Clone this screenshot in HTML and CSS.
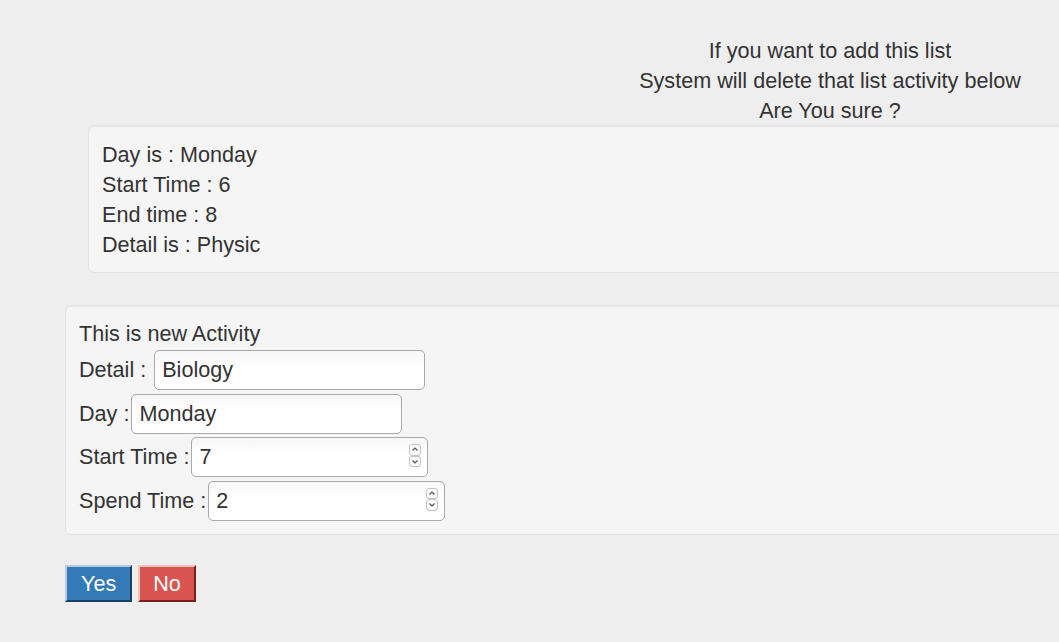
FILE: index.html
```html
<!DOCTYPE html>
<html>
<head>
<meta charset="utf-8">
<link rel="stylesheet" href="styles.css">
</head>
<body>
<div class="page">
  <div class="upper">
    <div class="notice">
      <div>If you want to add this list</div>
      <div>System will delete that list activity below</div>
      <div>Are You sure ?</div>
    </div>
    <div class="well old-well">
      <div>Day is : Monday</div>
      <div>Start Time : 6</div>
      <div>End time : 8</div>
      <div>Detail is : Physic</div>
    </div>
  </div>
  <div class="well new-well">
    <div class="title-row">This is new Activity</div>
    <div class="field-row"><span>Detail :&nbsp;</span><input class="in text-in" type="text" value="Biology"></div>
    <div class="field-row"><span>Day :</span><input class="in text-in" type="text" value="Monday"></div>
    <div class="field-row"><span>Start Time :</span><span class="num-wrap"><input class="in num-in" type="number" value="7"><span class="spin"><span class="spin-btn"><svg viewBox="0 0 12 11" width="12" height="11"><path d="M3.5 6.5 L6 4 L8.5 6.5" fill="none" stroke="#555" stroke-width="1.2"/></svg></span><span class="spin-btn"><svg viewBox="0 0 12 11" width="12" height="11"><path d="M3.5 4.5 L6 7 L8.5 4.5" fill="none" stroke="#555" stroke-width="1.2"/></svg></span></span></span></div>
    <div class="field-row"><span>Spend Time :</span><span class="num-wrap"><input class="in num-in" type="number" value="2"><span class="spin"><span class="spin-btn"><svg viewBox="0 0 12 11" width="12" height="11"><path d="M3.5 6.5 L6 4 L8.5 6.5" fill="none" stroke="#555" stroke-width="1.2"/></svg></span><span class="spin-btn"><svg viewBox="0 0 12 11" width="12" height="11"><path d="M3.5 4.5 L6 7 L8.5 4.5" fill="none" stroke="#555" stroke-width="1.2"/></svg></span></span></span></div>
  </div>
  <div class="actions">
    <button class="btn btn-yes">Yes</button>
    <button class="btn btn-no">No</button>
  </div>
</div>
</body>
</html>
```

FILE: styles.css
```css
html, body {
  margin: 0;
  padding: 0;
  overflow: hidden;
  background: #eeeeee;
}
body {
  font-family: "Liberation Sans", Arial, sans-serif;
  font-size: 21.6px;
  line-height: 30px;
  color: #333333;
  width: 1059px;
  height: 642px;
}
.page {
  padding-top: 36px;
}
.upper {
  margin-left: 88px;
  width: 1484px;
}
.notice {
  text-align: center;
  margin-bottom: -1px;
}
.well {
  background: #f5f5f5;
  border: 1px solid #e3e3e3;
  border-radius: 6px;
  box-shadow: inset 0 1px 1px rgba(0, 0, 0, 0.05);
}
.old-well {
  padding: 14px 13px 12px 13px;
}
.new-well {
  margin-top: 32px;
  margin-left: 65px;
  width: 1484px;
  padding: 13px 13px 13px 13px;
  display: flex;
  flex-direction: column;
  gap: 3.4px;
}
.title-row {
  height: 28px;
  line-height: 29px;
}
.field-row {
  display: flex;
  align-items: center;
  height: 40px;
}
.field-row > span:first-child {
  white-space: pre;
}
.num-wrap {
  position: relative;
  display: flex;
}
.in {
  box-sizing: border-box;
  height: 40px;
  font-family: "Liberation Sans", Arial, sans-serif;
  font-size: 21.6px;
  color: #333333;
  border: 1px solid #a9a9a9;
  border-radius: 5px;
  background: linear-gradient(#f6f6f6, #ffffff 40%);
  padding: 0 7px;
  margin: 0 0 0 2px;
  outline: none;
}
.num-in {
  -moz-appearance: textfield;
  appearance: textfield;
}
.num-in::-webkit-inner-spin-button,
.num-in::-webkit-outer-spin-button {
  -webkit-appearance: none;
  margin: 0;
}
.text-in {
  width: 271px;
}
.num-in {
  width: 237px;
}
.spin {
  position: absolute;
  right: 7px;
  top: 7px;
  display: flex;
  flex-direction: column;
}
.spin-btn {
  display: block;
  box-sizing: border-box;
  width: 12px;
  height: 11.5px;
  border: 1px solid #c4c4c4;
  border-radius: 3px;
  background: #fafafa;
  line-height: 0;
}
.spin-btn svg {
  display: block;
  margin: -1px 0 0 -1px;
}
.actions {
  margin-left: 65px;
  margin-top: 30px;
  display: flex;
  gap: 6px;
}
.btn {
  box-sizing: border-box;
  height: 37px;
  padding: 0 14px;
  font-family: "Liberation Sans", Arial, sans-serif;
  font-size: 21.6px;
  line-height: 33px;
  color: #ffffff;
  border-width: 2px;
  border-style: solid;
  border-radius: 0;
  cursor: pointer;
}
.btn-yes {
  background: #337ab7;
  border-color: #b5cbe2 #1c3f60 #1c3f60 #b5cbe2;
}
.btn-no {
  padding: 0 13px;
  background: #d9534f;
  border-color: #f0c2c0 #7a1f1d #7a1f1d #f0c2c0;
}
```
